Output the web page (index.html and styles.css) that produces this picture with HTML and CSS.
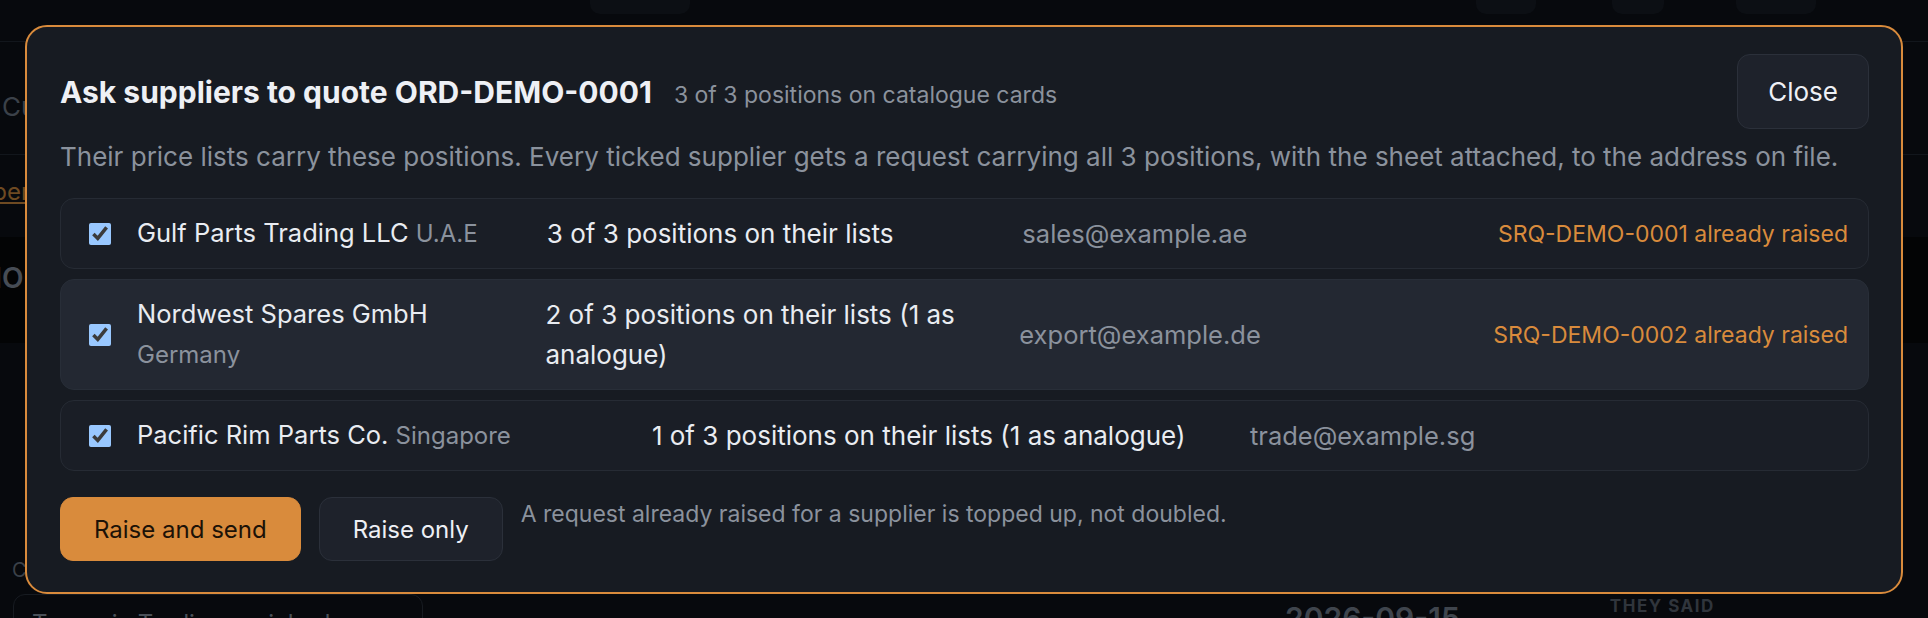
FILE: index.html
```html
<!DOCTYPE html>
<html lang="en">
<head>
<meta charset="UTF-8" />
<meta name="viewport" content="width=device-width, initial-scale=1" />
<title>ORD-DEMO-0001 – Ask suppliers to quote</title>
<link rel="stylesheet" href="styles.css">
</head>
<body>

  <!-- Order page, dimmed behind the dialog -->
  <div class="page">
    <div class="topbar">
      <span class="top-tab t-wide"></span>
      <span class="top-tab t-a"></span>
      <span class="top-tab t-b"></span>
      <span class="top-tab t-c"></span>
    </div>
    <div class="tabs"><span>Customer</span></div>
    <div class="crumbs"><a href="#">Open in catalogue</a></div>
    <div class="order-head"><h1>ORD-DEMO-0001</h1></div>
    <div class="page-body"><span class="section-label">Conversation</span></div>
    <div class="feed">
      <div class="feed-card">Tranquia Trading enriched</div>
      <div class="feed-date">2026-09-15</div>
      <div class="feed-tag">THEY SAID</div>
    </div>
  </div>

  <!-- Ask suppliers dialog -->
  <div class="overlay">
    <section class="dialog">
      <div class="dialog-head">
        <div class="dialog-title">
          <h2>Ask suppliers to quote ORD-DEMO-0001</h2>
          <span class="count">3 of 3 positions on catalogue cards</span>
        </div>
        <button class="btn">Close</button>
      </div>

      <p class="lead">Their price lists carry these positions. Every ticked supplier gets a request carrying all 3 positions, with the sheet attached, to the address on file.</p>

      <ul class="suppliers">
        <li class="supplier">
          <input type="checkbox" checked />
          <div class="name">Gulf Parts Trading LLC <span class="country">U.A.E</span></div>
          <div class="cover">3 of 3 positions on their lists</div>
          <div class="email">sales@example.ae</div>
          <div class="status">SRQ-DEMO-0001 already raised</div>
        </li>
        <li class="supplier hover">
          <input type="checkbox" checked />
          <div class="name">Nordwest Spares GmbH <span class="country">Germany</span></div>
          <div class="cover">2 of 3 positions on their lists (1 as analogue)</div>
          <div class="email">export@example.de</div>
          <div class="status">SRQ-DEMO-0002 already raised</div>
        </li>
        <li class="supplier">
          <input type="checkbox" checked />
          <div class="name">Pacific Rim Parts Co. <span class="country">Singapore</span></div>
          <div class="cover">1 of 3 positions on their lists (1 as analogue)</div>
          <div class="email">trade@example.sg</div>
        </li>
      </ul>

      <div class="dialog-foot">
        <button class="btn primary">Raise and send</button>
        <button class="btn">Raise only</button>
        <span class="note">A request already raised for a supplier is topped up, not doubled.</span>
      </div>
    </section>
  </div>

</body>
</html>
```

FILE: styles.css
```css
* {
  box-sizing: border-box;
}
html, body {
  margin: 0;
  height: 100%;
}
body {
  font-family: Inter, "Noto Sans", "DejaVu Sans", sans-serif;
  background: #07090d;
  color: #e9ecf1;
  overflow: hidden;
  color-scheme: dark;
}

/* Page behind the dialog */
.page {
  color: #3b4149;
}
.topbar {
  height: 42px;
  display: flex;
  align-items: flex-start;
  padding: 0 112px 0 590px;
  border-bottom: 1px solid #12161c;
}
.top-tab {
  height: 14px;
  background: #0c0f14;
  border-radius: 0 0 10px 10px;
}
.t-wide { width: 100px; margin-right: auto; }
.t-a { width: 60px; }
.t-b { width: 52px; margin-left: 76px; }
.t-c { width: 80px; margin-left: 72px; }
.tabs {
  height: 113px;
  display: flex;
  align-items: flex-end;
  padding: 0 0 32px 2px;
  font-size: 26px;
  border-bottom: 1px solid #12161c;
}
.crumbs {
  height: 82px;
  padding-top: 22px;
  font-size: 24px;
}
.crumbs a {
  color: #6e4a22;
  margin-left: -26px;
}
.order-head {
  height: 106px;
  background: #030405;
  padding-top: 24px;
}
.order-head h1 {
  margin: 0 0 0 -134px;
  font-size: 28px;
  font-weight: 600;
  color: #464c55;
}
.page-body {
  height: 251px;
  display: flex;
  align-items: flex-end;
  padding: 0 0 12px 12px;
  font-size: 20px;
}
.feed {
  display: flex;
  align-items: flex-start;
}
.feed-card {
  width: 410px;
  margin-left: 13px;
  padding: 14px 18px;
  border: 1px solid #171b21;
  border-radius: 12px 12px 0 0;
  font-size: 24px;
  color: #4a5058;
}
.feed-date {
  margin: 6px 0 0 862px;
  font-size: 30px;
  font-weight: 600;
  color: #3f454d;
}
.feed-tag {
  margin: 2px 0 0 150px;
  font-size: 17px;
  font-weight: 700;
  letter-spacing: 1.5px;
  color: #30353c;
}

/* Dialog */
.overlay {
  position: fixed;
  inset: 0;
  padding: 25px;
  display: flex;
  align-items: flex-start;
  justify-content: center;
}
.dialog {
  width: 100%;
  background: #171b22;
  border: 2px solid #d98b3c;
  border-radius: 22px;
  padding: 27px 32px 31px 33px;
}
.dialog-head {
  display: flex;
  align-items: center;
  justify-content: space-between;
}
.dialog-title {
  display: flex;
  align-items: baseline;
  gap: 22px;
}
.dialog-title h2 {
  margin: 0;
  font-size: 30px;
  font-weight: 700;
  color: #eef0f5;
}
.count {
  font-size: 23px;
  color: #8b929d;
}
.lead {
  margin: 10px 0 0;
  font-size: 26px;
  line-height: 36px;
  color: #8b929d;
}

.btn {
  font-family: inherit;
  height: 64px;
  padding: 0 33px;
  font-size: 24px;
  color: #eef0f5;
  background: #1e222b;
  border: 1px solid #2b303a;
  border-radius: 13px;
  cursor: pointer;
}
.dialog-head .btn {
  height: 75px;
  padding: 0 30px;
  font-size: 26px;
}
.btn.primary {
  background: #d98b3c;
  border-color: #d98b3c;
  color: #1c1207;
}

/* Supplier rows */
.suppliers {
  list-style: none;
  margin: 23px 0 0;
  padding: 0;
  display: flex;
  flex-direction: column;
  gap: 10px;
}
.supplier {
  display: grid;
  grid-template-columns: 32px minmax(0, 6fr) minmax(0, 7fr) minmax(0, 7fr) auto;
  column-gap: 16px;
  align-items: center;
  padding: 14px 20px 14px 28px;
  line-height: 40px;
  background: #1a1e26;
  border: 1px solid #262b34;
  border-radius: 14px;
}
.supplier.hover {
  background: #232832;
  border-color: #282e38;
}
.supplier input {
  width: 22px;
  height: 22px;
  margin: 0;
  accent-color: #99c8ff;
}
.name {
  font-size: 25.5px;
  color: #e9ecf1;
}
.country {
  font-size: 24px;
  color: #8b929d;
  white-space: nowrap;
}
.cover {
  font-size: 26px;
  color: #e9ecf1;
}
.email {
  font-size: 25.5px;
  color: #8b929d;
}
.status {
  font-size: 23px;
  color: #d98b3c;
  text-align: right;
  white-space: nowrap;
}

.dialog-foot {
  margin-top: 26px;
  display: flex;
  align-items: flex-start;
  gap: 18px;
}
.note {
  font-size: 23px;
  line-height: 34px;
  color: #8b929d;
}
```
